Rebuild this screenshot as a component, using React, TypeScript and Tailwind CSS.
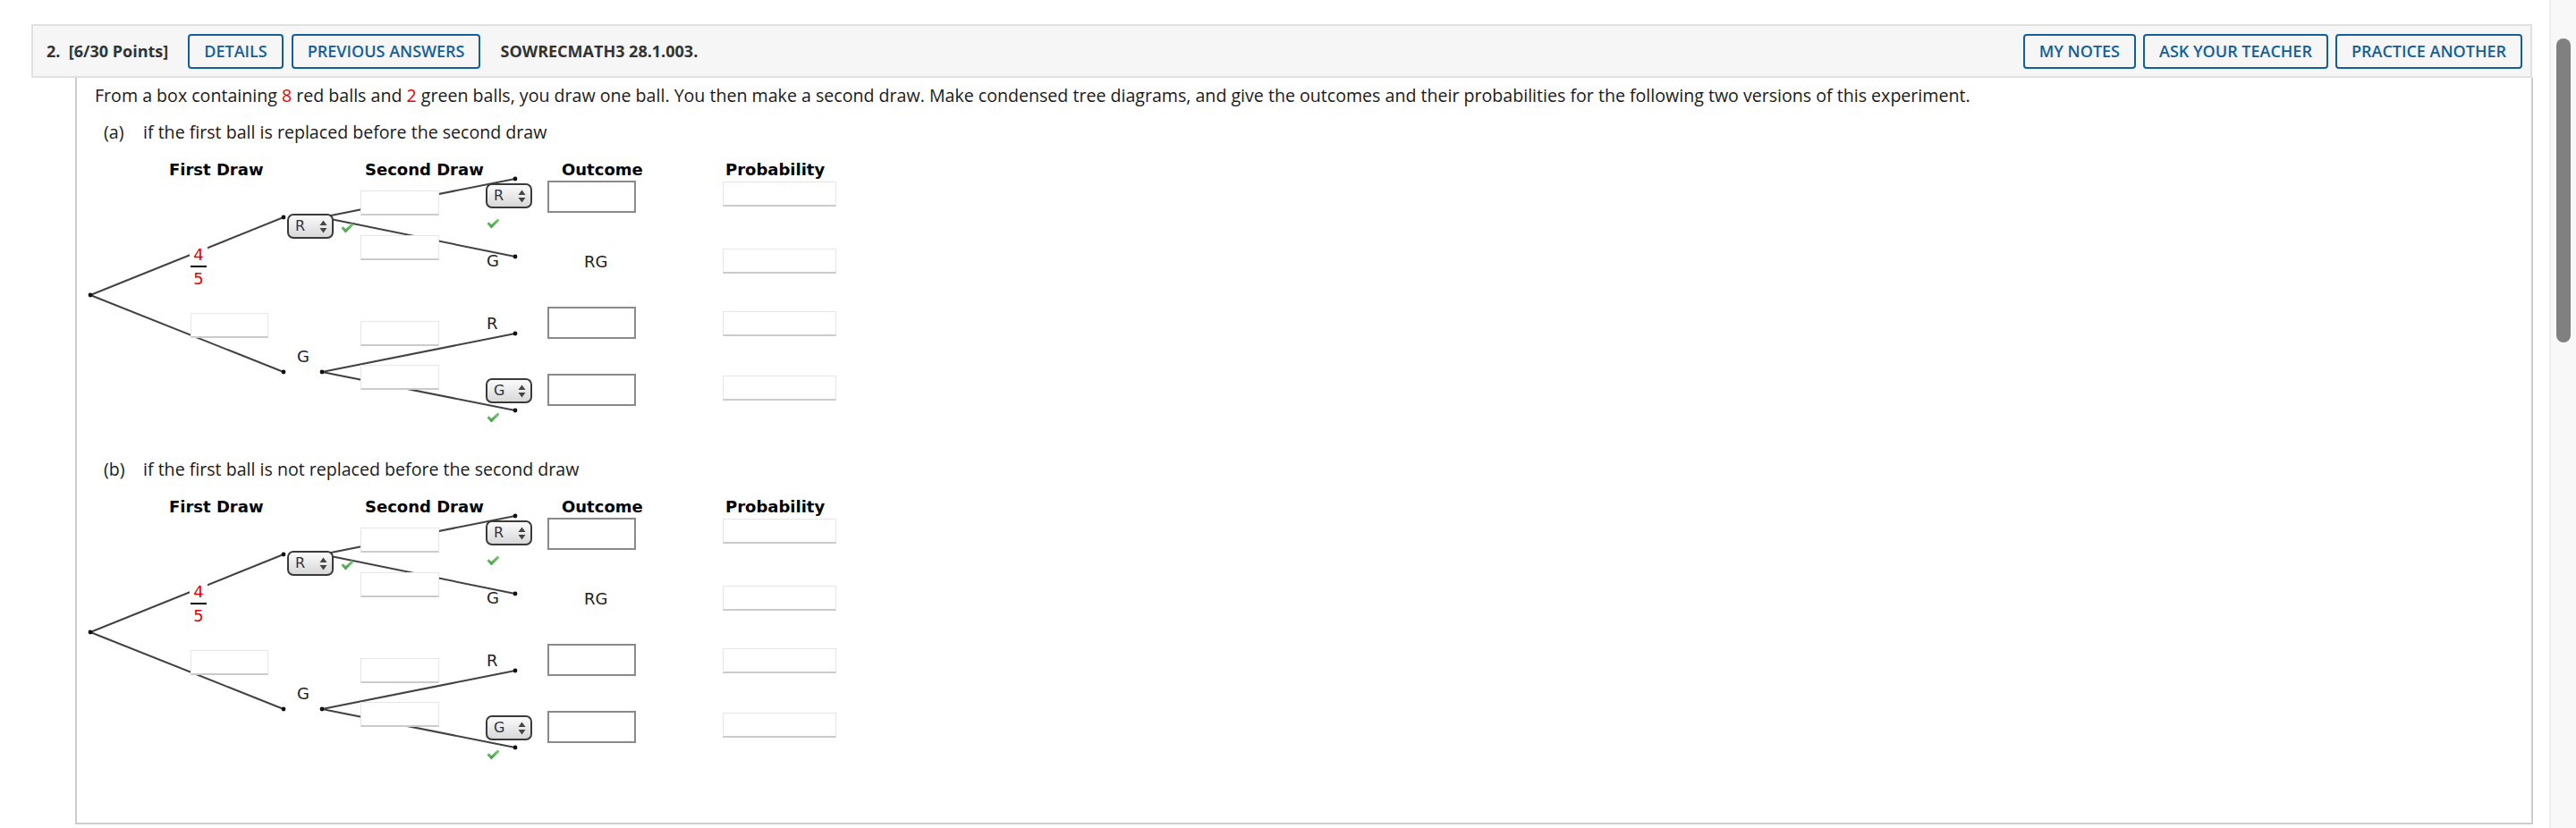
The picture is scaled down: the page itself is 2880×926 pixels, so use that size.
import React from "react";

const tree = { fontFamily: '"DejaVu Sans", Verdana, sans-serif' };

function Check({ x, y }: { x: number; y: number }) {
  return (
    <svg className="absolute" style={{ left: x, top: y }} width="15" height="12" viewBox="0 0 15 12">
      <defs>
        <linearGradient id="ck" x1="0" y1="0" x2="0" y2="1">
          <stop offset="0" stopColor="#7cc97a" />
          <stop offset="1" stopColor="#3f9e42" />
        </linearGradient>
      </defs>
      <path d="M0.5 6.2 L2.6 4.2 L5.4 7 L12.4 0.5 L14.5 2.6 L5.4 11.5 Z" fill="url(#ck)" />
    </svg>
  );
}

function Sel({ x, y, v }: { x: number; y: number; v: string }) {
  return (
    <div
      className="absolute flex h-[28px] w-[52px] items-center justify-between rounded-[7px] border-2 border-[#3a3a3a] bg-linear-to-b from-[#fbfbfb] to-[#d8d8d8] pl-[7px] pr-[5px] text-[16px] leading-none text-[#333]"
      style={{ left: x, top: y, ...tree }}
    >
      <span>{v}</span>
      <svg width="9" height="15" viewBox="0 0 9 15">
        <path d="M4.5 0.5 L8.5 6 L0.5 6 Z" fill="#444" />
        <path d="M4.5 14.5 L8.5 9 L0.5 9 Z" fill="#444" />
      </svg>
    </div>
  );
}

function Inp({ x, y, w }: { x: number; y: number; w: number }) {
  return (
    <div
      className="absolute h-[28px] border border-[#e6e6e6] border-b-2 border-b-[#cbcbcb] bg-white"
      style={{ left: x, top: y, width: w }}
    />
  );
}

function OutBox({ x, y }: { x: number; y: number }) {
  return <div className="absolute h-[36px] w-[99px] border-2 border-[#8a8a8a] bg-white" style={{ left: x, top: y }} />;
}

function Label({ x, y, t }: { x: number; y: number; t: string }) {
  return (
    <div className="absolute text-[18px] leading-[20px] text-[#222]" style={{ left: x, top: y, ...tree }}>
      {t}
    </div>
  );
}

function Tree() {
  const dots: [number, number][] = [
    [15, 170],
    [231, 83],
    [231, 256],
    [274, 256],
    [490, 40],
    [490, 127],
    [490, 213],
    [490, 299],
  ];
  return (
    <div className="relative h-[353px] w-full">
      <div className="absolute left-[103px] top-[18px] text-[18px] font-bold leading-[24px] text-black" style={tree}>
        First Draw
      </div>
      <div className="absolute left-[322px] top-[18px] text-[18px] font-bold leading-[24px] text-black" style={tree}>
        Second Draw
      </div>
      <div className="absolute left-[542px] top-[18px] text-[18px] font-bold leading-[24px] text-black" style={tree}>
        Outcome
      </div>
      <div className="absolute left-[725px] top-[18px] text-[18px] font-bold leading-[24px] text-black" style={tree}>
        Probability
      </div>

      <svg className="absolute left-0 top-0" width="520" height="353" viewBox="0 0 520 353">
        <g stroke="#424242" strokeWidth="2" fill="none">
          <line x1="15" y1="170" x2="231" y2="83" />
          <line x1="15" y1="170" x2="231" y2="256" />
          <line x1="274" y1="83" x2="490" y2="40" />
          <line x1="274" y1="83" x2="490" y2="127" />
          <line x1="274" y1="256" x2="490" y2="213" />
          <line x1="274" y1="256" x2="490" y2="299" />
        </g>
        {dots.map(([cx, cy], i) => (
          <circle key={i} cx={cx} cy={cy} r="2.4" fill="#111" />
        ))}
      </svg>

      <div className="absolute left-[126px] top-[115px] flex w-[20px] flex-col items-center bg-white text-[18px] leading-[20px] text-[#e60000]" style={tree}>
        <span>4</span>
        <span className="mt-[2px] h-[2px] w-[18px] bg-black" />
        <span className="mt-[3px]">5</span>
      </div>

      <Inp x={127} y={190} w={87} />
      <Inp x={317} y={53} w={88} />
      <Inp x={317} y={103} w={88} />
      <Inp x={317} y={199} w={88} />
      <Inp x={317} y={248} w={88} />

      <Sel x={235} y={79} v="R" />
      <Check x={295} y={89} />
      <Sel x={457} y={45} v="R" />
      <Check x={458} y={84} />
      <Label x={458} y={122} t="G" />
      <Label x={458} y={192} t="R" />
      <Sel x={457} y={263} v="G" />
      <Check x={458} y={301} />
      <Label x={246} y={229} t="G" />

      <OutBox x={526} y={42} />
      <div className="absolute left-[567px] top-[123px] text-[18px] leading-[20px] text-[#222]" style={tree}>
        RG
      </div>
      <OutBox x={526} y={183} />
      <OutBox x={526} y={258} />

      <Inp x={722} y={43} w={127} />
      <Inp x={722} y={118} w={127} />
      <Inp x={722} y={188} w={127} />
      <Inp x={722} y={260} w={127} />
    </div>
  );
}

function Btn({ children }: { children: React.ReactNode }) {
  return (
    <div className="flex h-[39px] items-center rounded-[4px] border-2 border-[#12609a] px-[16px] text-[18px] font-semibold leading-none text-[#12609a]">
      {children}
    </div>
  );
}

export default function App() {
  return (
    <div
      className="flex h-[926px] w-[2880px] overflow-hidden bg-white text-[#222]"
      style={{ fontFamily: '"Open Sans", "Liberation Sans", sans-serif' }}
    >
      <div className="w-[2850px] pl-[35px] pt-[27px]">
        <div className="flex h-[60px] w-[2796px] items-center border-2 border-[#e1e1e1] bg-[#f6f6f6] pl-[15px] pr-[9px]">
          <span className="whitespace-pre text-[18px] font-bold text-[#333]">2.  [6/30 Points]</span>
          <div className="ml-[22px] flex gap-[9px]">
            <Btn>DETAILS</Btn>
            <Btn>PREVIOUS ANSWERS</Btn>
          </div>
          <span className="ml-[22px] text-[18px] font-bold text-[#333]">SOWRECMATH3 28.1.003.</span>
          <div className="ml-auto flex gap-[8px]">
            <Btn>MY NOTES</Btn>
            <Btn>ASK YOUR TEACHER</Btn>
            <Btn>PRACTICE ANOTHER</Btn>
          </div>
        </div>
        <div className="ml-[49px] h-[835px] w-[2748px] border-x-2 border-b-2 border-[#cdcdcd]">
          <p className="pl-[20px] pt-[8px] text-[19.6px] leading-[24px] text-[#1a1a1a]">
            From a box containing <span className="text-[#e60000]">8</span> red balls and{" "}
            <span className="text-[#e60000]">2</span> green balls, you draw one ball. You then make a second draw. Make
            condensed tree diagrams, and give the outcomes and their probabilities for the following two versions of
            this experiment.
          </p>
          <div className="mt-[17px] flex h-[24px] items-center pl-[30px] text-[19.6px] leading-[24px] text-[#1a1a1a]">
            <span className="w-[44px]">(a)</span>
            <span>if the first ball is replaced before the second draw</span>
          </div>
          <Tree />
          <div className="flex h-[24px] items-center pl-[30px] text-[19.6px] leading-[24px] text-[#1a1a1a]">
            <span className="w-[44px]">(b)</span>
            <span>if the first ball is not replaced before the second draw</span>
          </div>
          <Tree />
        </div>
      </div>
      <div className="relative h-[926px] w-[30px] border-l-2 border-[#ececec] bg-[#f8f8f8]">
        <div className="absolute left-[6px] top-[43px] h-[340px] w-[16px] rounded-full bg-[#808080]" />
      </div>
    </div>
  );
}
